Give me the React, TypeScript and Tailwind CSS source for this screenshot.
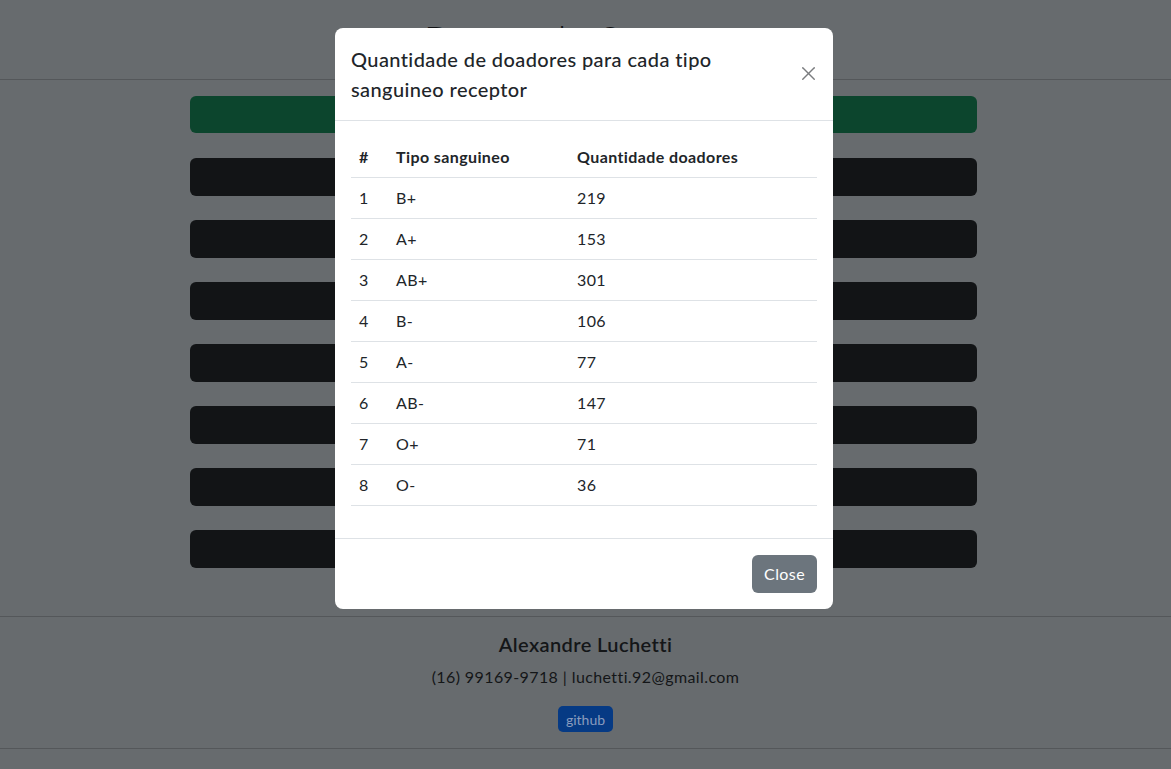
import { X } from "lucide-react";

const tipos = [
    { id: 1, tipo: "B+", qtd: 219 },
    { id: 2, tipo: "A+", qtd: 153 },
    { id: 3, tipo: "AB+", qtd: 301 },
    { id: 4, tipo: "B-", qtd: 106 },
    { id: 5, tipo: "A-", qtd: 77 },
    { id: 6, tipo: "AB-", qtd: 147 },
    { id: 7, tipo: "O+", qtd: 71 },
    { id: 8, tipo: "O-", qtd: 36 },
];

export default function App() {
    return (
        <div className="relative min-h-[769px] w-full overflow-hidden bg-[#676b6e] font-['Lato','Liberation_Sans',sans-serif] tracking-[0.4px] text-[#111315]">
            {/* page behind the backdrop */}
            <header className="flex h-[80px] items-center justify-center border-b border-[#54575a]">
                <h1 className="pr-[20px] text-[40px] font-light leading-[48px]">Banco de Sangue</h1>
            </header>

            <main className="flex flex-col gap-[24px] pl-[190px] pt-[16px] pb-[48px]">
                <div className="mb-[1px] h-[37px] w-[787px] rounded-[6px] bg-[#0c452d]" />
                {Array.from({ length: 7 }).map((_, i) => (
                    <div key={i} className="h-[38px] w-[787px] rounded-[6px] bg-[#121416]" />
                ))}
            </main>

            <footer className="flex flex-col items-center border-y border-[#54575a] pt-[15px] pb-[16px]">
                <h5 className="text-[20px] font-semibold leading-[24px] text-[#141618]">Alexandre Luchetti</h5>
                <p className="mt-[9px] text-[16px] leading-[24px] text-[#141618]">(16) 99169-9718 | luchetti.92@gmail.com</p>
                <span className="mt-[17px] flex h-[26px] items-center rounded-[5px] bg-[#063a84] px-[8px] text-[14px] tracking-normal text-[#8a9cbe]">github</span>
            </footer>

            {/* modal */}
            <div className="absolute left-[335px] top-[28px] w-[498px] rounded-[8px] bg-white text-[#212529]">
                <div className="flex items-start justify-between border-b border-[#dee2e6] p-[16px]">
                    <h5 className="w-[420px] text-[20px] font-medium leading-[30px]">
                        Quantidade de doadores para cada tipo sanguineo receptor
                    </h5>
                    <button className="mt-[18px] mr-[-3px] text-[#7a7c7f]">
                        <X className="h-[23px] w-[23px]" strokeWidth={1.5} />
                    </button>
                </div>

                <div className="p-[16px]">
                    <table className="mb-[16px] w-full text-left text-[16px] leading-[24px]">
                        <thead>
                            <tr className="border-b border-[#dee2e6]">
                                <th className="w-[37px] p-[8px] font-bold">#</th>
                                <th className="w-[181px] p-[8px] font-bold">Tipo sanguineo</th>
                                <th className="p-[8px] font-bold">Quantidade doadores</th>
                            </tr>
                        </thead>
                        <tbody>
                            {tipos.map((t) => (
                                <tr key={t.id} className="border-b border-[#dee2e6]">
                                    <td className="p-[8px]">{t.id}</td>
                                    <td className="p-[8px]">{t.tipo}</td>
                                    <td className="p-[8px]">{t.qtd}</td>
                                </tr>
                            ))}
                        </tbody>
                    </table>
                </div>

                <div className="flex justify-end border-t border-[#dee2e6] px-[16px] py-[16px]">
                    <button className="h-[38px] rounded-[6px] bg-[#6c757d] px-[12px] text-[16px] text-white">Close</button>
                </div>
            </div>
        </div>
    );
}
